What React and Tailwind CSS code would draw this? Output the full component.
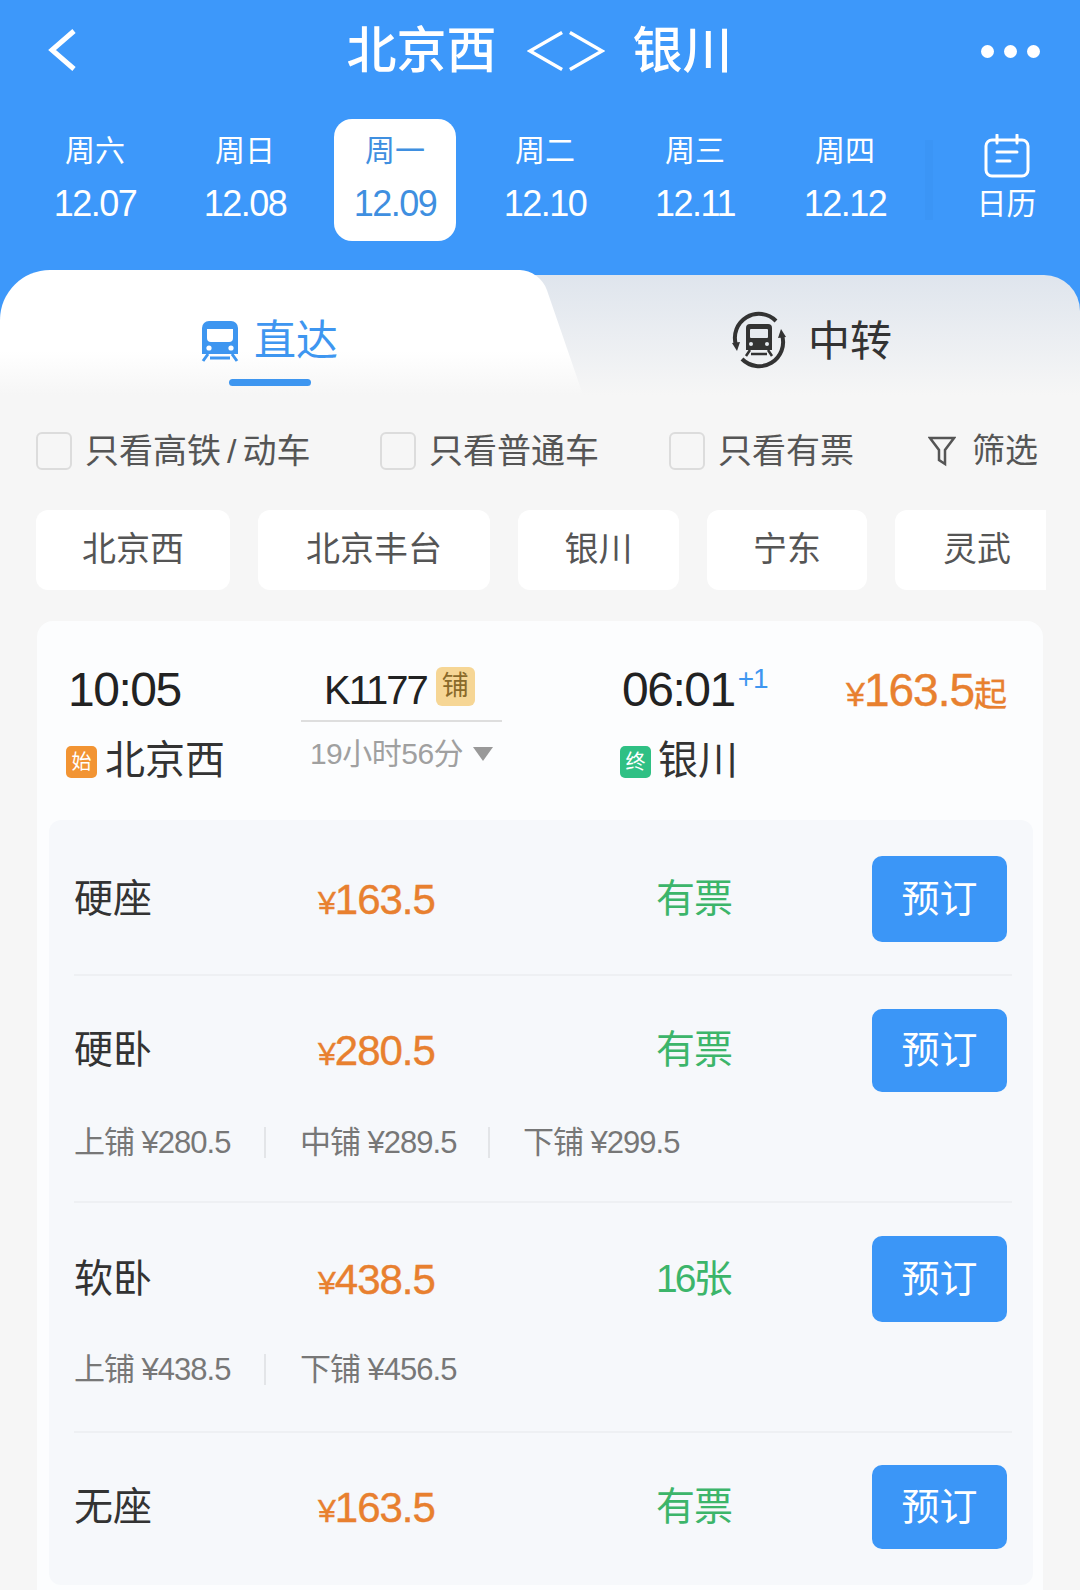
import React from "react";

const days = [
  { week: "周六", date: "12.07" },
  { week: "周日", date: "12.08" },
  { week: "周一", date: "12.09", active: true },
  { week: "周二", date: "12.10" },
  { week: "周三", date: "12.11" },
  { week: "周四", date: "12.12" },
];

const filters = [
  { label: "只看高铁", tail: "动车", cls: "w-[344px]" },
  { label: "只看普通车", cls: "w-[289px]" },
  { label: "只看有票", cls: "w-[259px]" },
];

const stations = [
  { name: "北京西", cls: "w-[194px] shrink-0" },
  { name: "北京丰台", cls: "w-[232px] shrink-0" },
  { name: "银川", cls: "w-[161px] shrink-0" },
  { name: "宁东", cls: "w-[160px] shrink-0" },
  { name: "灵武", cls: "w-[164px] shrink-0" },
];

const seats = [
  { name: "硬座", price: "163.5", status: "有票", statusCls: "tracking-[-1px]", cls: "pt-[36px] pb-[32px] border-b-2", btn: "h-[86px]" },
  {
    name: "硬卧",
    price: "280.5",
    status: "有票",
    statusCls: "tracking-[-1px]",
    cls: "pt-[33px] pb-[41px] border-b-2",
    btn: "h-[83px]",
    subCls: "mt-[32px]",
    sub: [
      { text: "上铺 ¥280.5", cls: "w-[192px]" },
      { text: "中铺 ¥289.5", cls: "w-[224px] pl-[34px]" },
      { text: "下铺 ¥299.5", cls: "pl-[33px]", last: true },
    ],
  },
  {
    name: "软卧",
    price: "438.5",
    status: "16张",
    statusCls: "tracking-[-3px]",
    cls: "pt-[33px] pb-[44px] border-b-2",
    btn: "h-[86px]",
    subCls: "mt-[29px]",
    sub: [
      { text: "上铺 ¥438.5", cls: "w-[192px]" },
      { text: "下铺 ¥456.5", cls: "pl-[34px]", last: true },
    ],
  },
  { name: "无座", price: "163.5", status: "有票", statusCls: "tracking-[-1px]", cls: "pt-[32px]", btn: "h-[84px]" },
];

function TrainIcon() {
  return (
    <svg width="40" height="42" viewBox="0 0 40 42" fill="none">
      <path d="M2 8a7 7 0 0 1 7-7h22a7 7 0 0 1 7 7v26H2z" fill="#3e96f0" />
      <path d="M7 7h26v11a4 4 0 0 1-4 4H11a4 4 0 0 1-4-4z" fill="#fff" />
      <rect x="6" y="6" width="28" height="3" fill="#3e96f0" />
      <circle cx="9" cy="28" r="2.6" fill="#fff" />
      <circle cx="31" cy="28" r="2.6" fill="#fff" />
      <path d="M8 34l-5 7M32 34l5 7M10 38h20" stroke="#3e96f0" strokeWidth="3" />
    </svg>
  );
}

function TransferIcon() {
  return (
    <svg width="58" height="58" viewBox="0 0 58 58" fill="none">
      <path d="M6 34a24 24 0 0 1 40-24" stroke="#333" strokeWidth="4" />
      <path d="M52 24a24 24 0 0 1-40 24" stroke="#333" strokeWidth="4" />
      <path d="M2 32l8-1-3 9zM56 26l-8 1 3-9z" fill="#333" />
      <path d="M16 17a4 4 0 0 1 4-4h18a4 4 0 0 1 4 4v22H16z" fill="#333" />
      <rect x="20" y="18" width="18" height="9" rx="1" fill="#e6eaf0" />
      <circle cx="21" cy="33" r="2" fill="#e6eaf0" />
      <circle cx="37" cy="33" r="2" fill="#e6eaf0" />
      <path d="M20 39l-4 6M38 39l4 6M21 43h16" stroke="#333" strokeWidth="2.5" />
    </svg>
  );
}

function CalendarIcon() {
  return (
    <svg width="46" height="44" viewBox="0 0 46 44" fill="none" stroke="#fff" strokeWidth="3" strokeLinecap="round">
      <rect x="2" y="6" width="42" height="36" rx="6" />
      <path d="M13 1v8M33 1v8M13 18h20M13 27h13" />
    </svg>
  );
}

function Seat({ seat }) {
  return (
    <div className={`${seat.cls} border-[#eef0f3]`}>
      <div className="flex items-center pr-[5px]">
        <div className="w-[244px] text-[39px] text-[#333]">{seat.name}</div>
        <div className="w-[338px] text-[42px] text-[#e8802f] tracking-[-1px] [-webkit-text-stroke:0.4px]">
          <span className="text-[32px]">¥</span>
          {seat.price}
        </div>
        <div className={`${seat.statusCls} flex-1 text-[39px] text-[#3cb56a]`}>{seat.status}</div>
        <div className={`${seat.btn} flex w-[135px] items-center justify-center rounded-[10px] bg-[#3b96f7] text-[38px] text-white`}>
          预订
        </div>
      </div>
      {seat.sub && (
        <div className={`${seat.subCls} flex h-[36px] items-center text-[31px] leading-none tracking-[-1px] text-[#777]`}>
          {seat.sub.map((s) => (
            <div key={s.text} className={`${s.cls} ${s.last ? "" : "border-r-2 border-[#e3e5e8]"}`}>
              {s.text}
            </div>
          ))}
        </div>
      )}
    </div>
  );
}

export default function App() {
  return (
    <div className="h-[1590px] w-[1080px] overflow-hidden bg-[#f6f6f6] font-['Liberation_Sans','Noto_Sans_CJK_SC',sans-serif]">
      <div className="bg-[#3d98fa]">
        <div className="flex h-[102px] items-center justify-between pl-[46px] pr-[40px]">
          <svg width="32" height="44" viewBox="0 0 32 44" fill="none" stroke="#fff" strokeWidth="5">
            <path d="M28 2L6 21l22 19" />
          </svg>
          <div className="ml-[20px] flex items-center text-[50px] font-medium leading-none text-white">
            <span>北京西</span>
            <svg className="ml-[30px] mr-[28px]" width="78" height="44" viewBox="0 0 80 44" fill="none" stroke="#fff" strokeWidth="3.5">
              <path d="M36 3L3 22l33 19M44 3l33 19-33 19" />
            </svg>
            <span>银川</span>
          </div>
          <div className="flex gap-[10px]">
            <div className="h-[13px] w-[13px] rounded-full bg-white" />
            <div className="h-[13px] w-[13px] rounded-full bg-white" />
            <div className="h-[13px] w-[13px] rounded-full bg-white" />
          </div>
        </div>

        <div className="mt-[17px] flex h-[122px] pl-[20px]">
          {days.map((d) => (
            <div key={d.date} className="flex w-[150px] justify-center">
              <div
                className={`flex w-[122px] flex-col items-center justify-center rounded-[18px] pb-[5px] ${
                  d.active ? "bg-white text-[#3f8fe0]" : "text-white"
                }`}
              >
                <div className="text-[30px] leading-[36px]">{d.week}</div>
                <div className="mt-[17px] text-[36px] leading-[36px] tracking-[-1.5px]">{d.date}</div>
              </div>
            </div>
          ))}
          <div className="ml-[5px] h-[80px] w-[8px] self-center bg-[#3b95f6]" />
          <div className="flex w-[147px] flex-col items-center justify-center pb-[5px] text-white">
            <CalendarIcon />
            <div className="mt-[8px] text-[30px] leading-[36px]">日历</div>
          </div>
        </div>

        <div className="relative mt-[34px] h-[120px]">
          <div className="absolute inset-y-0 left-[60px] right-0 rounded-tr-[36px] bg-gradient-to-b from-[#dfe5ed] to-[#f6f6f6]" />
          <div className="absolute left-0 top-[-5px] h-[125px] w-[515px] rounded-tl-[50px] bg-gradient-to-b from-white from-[65%] to-[#f6f6f6]" />
          <div className="absolute left-[470px] top-[-5px] h-[125px] w-[70px] origin-top-left skew-x-[19deg] rounded-tr-[20px] bg-gradient-to-b from-white from-[65%] to-[#f6f6f6]" />
          <div className="absolute left-[200px] top-[45px] flex items-center gap-[14px] text-[42px] leading-none text-[#3e96f0]">
            <TrainIcon />
            <span>直达</span>
          </div>
          <div className="absolute left-[229px] top-[104px] h-[7px] w-[82px] rounded-full bg-[#3e96f0]" />
          <div className="absolute left-[730px] top-[36px] flex items-center gap-[20px] text-[42px] leading-none text-[#333]">
            <TransferIcon />
            <span className="mt-[3px]">中转</span>
          </div>
        </div>
      </div>

      <div className="mt-[37px] flex h-[38px] items-center pl-[36px]">
        {filters.map((f) => (
          <div key={f.label} className={`${f.cls} flex items-center gap-[13px] text-[34px] text-[#555]`}>
            <div className="h-[38px] w-[36px] rounded-[6px] border-2 border-[#dcdcdc]" />
            <span>
              {f.label}
              {f.tail && (
                <>
                  <span className="mx-[6px]">/</span>
                  {f.tail}
                </>
              )}
            </span>
          </div>
        ))}
        <div className="flex items-center gap-[16px] text-[33px] text-[#555]">
          <svg width="28" height="32" viewBox="0 0 28 32" fill="none" stroke="#555" strokeWidth="2.5">
            <path d="M2 3h24L17 15v14l-6-4V15z" />
          </svg>
          <span>筛选</span>
        </div>
      </div>

      <div className="ml-[36px] mt-[40px] flex w-[1010px] gap-[28px] overflow-hidden">
        {stations.map((s) => (
          <div key={s.name} className={`${s.cls} flex h-[80px] items-center justify-center rounded-[12px] bg-white pb-[2px] text-[34px] text-[#555]`}>
            {s.name}
          </div>
        ))}
      </div>

      <div className="mx-[37px] mt-[31px] h-[969px] rounded-t-[16px] bg-[#fcfdfe]">
        <div className="flex h-[199px] pl-[29px] pt-[40px]">
          <div className="w-[235px]">
            <div className="h-[58px] pl-[2px] text-[48px] leading-[58px] tracking-[-1.5px] text-[#222]">10:05</div>
            <div className="mt-[16px] flex items-center gap-[8px] text-[40px] leading-[50px] text-[#333]">
              <div className="mt-[4px] flex h-[32px] w-[31px] items-center justify-center rounded-[5px] bg-[#f29433] text-[20px] text-white">始</div>
              <span>北京西</span>
            </div>
          </div>
          <div className="w-[319px]">
            <div className="w-[201px]">
              <div className="flex h-[58px] items-center pl-[23px] text-[40px] tracking-[-2px] text-[#222]">
                <span>K1177</span>
                <div className="mb-[8px] ml-[9px] flex h-[39px] w-[39px] items-center justify-center rounded-[6px] bg-[#f6d695] text-[27px] tracking-normal text-[#8a6a2a]">铺</div>
              </div>
              <div className="mt-[1px] h-[2px] bg-[#dedede]" />
              <div className="mt-[14px] flex items-center justify-center gap-[10px] text-[30px] leading-[36px] tracking-[-0.5px] text-[#a0a0a0]">
                <span>19小时56分</span>
                <div className="h-0 w-0 border-x-[10px] border-t-[14px] border-x-transparent border-t-[#999]" />
              </div>
            </div>
          </div>
          <div className="w-[226px]">
            <div className="flex h-[58px]">
              <span className="pl-[2px] text-[48px] leading-[58px] tracking-[-1.5px] text-[#222]">06:01</span>
              <span className="ml-[3px] mt-[3px] text-[28px] leading-[30px] tracking-[-1px] text-[#3e96f0]">+1</span>
            </div>
            <div className="mt-[16px] flex items-center gap-[7px] text-[40px] leading-[50px] text-[#333]">
              <div className="mt-[4px] flex h-[32px] w-[31px] items-center justify-center rounded-[5px] bg-[#2fc084] text-[20px] text-white">终</div>
              <span>银川</span>
            </div>
          </div>
          <div className="h-[58px] text-[46px] leading-[58px] tracking-[-1px] text-[#e8802f] [-webkit-text-stroke:0.4px]">
            <span className="text-[34px]">¥</span>163.5<span className="text-[33px]">起</span>
          </div>
        </div>

        <div className="ml-[12px] mr-[10px] h-[765px] rounded-[12px] bg-[#f6f8fb] pl-[25px] pr-[21px]">
          {seats.map((seat) => (
            <Seat key={seat.name} seat={seat} />
          ))}
        </div>
      </div>
    </div>
  );
}
